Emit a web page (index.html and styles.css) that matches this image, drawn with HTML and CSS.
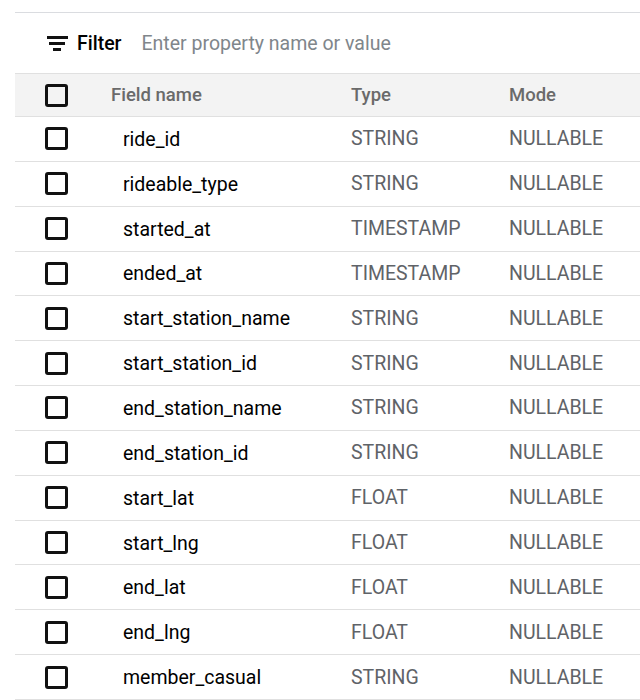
FILE: index.html
```html
<!DOCTYPE html>
<html>
<head>
<meta charset="utf-8">
<link rel="stylesheet" href="styles.css">
</head>
<body>
<div class="panel">
  <div class="filter-bar">
    <svg class="filter-icon" viewBox="0 0 21 15" width="21" height="15"><rect x="0" y="0" width="21" height="3" fill="#111"/><rect x="2" y="6" width="16" height="3" fill="#111"/><rect x="6" y="12" width="8" height="3" fill="#111"/></svg>
    <span class="filter-label">Filter</span>
    <span class="filter-input">Enter property name or value</span>
  </div>
  <div class="table">
    <div class="row head">
      <div class="cell check"><span class="box"></span></div>
      <div class="cell">Field name</div>
      <div class="cell">Type</div>
      <div class="cell">Mode</div>
    </div>
    <div class="row"><div class="cell check"><span class="box"></span></div><div class="cell name">ride_id</div><div class="cell type">STRING</div><div class="cell type">NULLABLE</div></div>
    <div class="row"><div class="cell check"><span class="box"></span></div><div class="cell name">rideable_type</div><div class="cell type">STRING</div><div class="cell type">NULLABLE</div></div>
    <div class="row"><div class="cell check"><span class="box"></span></div><div class="cell name">started_at</div><div class="cell type">TIMESTAMP</div><div class="cell type">NULLABLE</div></div>
    <div class="row"><div class="cell check"><span class="box"></span></div><div class="cell name">ended_at</div><div class="cell type">TIMESTAMP</div><div class="cell type">NULLABLE</div></div>
    <div class="row"><div class="cell check"><span class="box"></span></div><div class="cell name">start_station_name</div><div class="cell type">STRING</div><div class="cell type">NULLABLE</div></div>
    <div class="row"><div class="cell check"><span class="box"></span></div><div class="cell name">start_station_id</div><div class="cell type">STRING</div><div class="cell type">NULLABLE</div></div>
    <div class="row"><div class="cell check"><span class="box"></span></div><div class="cell name">end_station_name</div><div class="cell type">STRING</div><div class="cell type">NULLABLE</div></div>
    <div class="row"><div class="cell check"><span class="box"></span></div><div class="cell name">end_station_id</div><div class="cell type">STRING</div><div class="cell type">NULLABLE</div></div>
    <div class="row"><div class="cell check"><span class="box"></span></div><div class="cell name">start_lat</div><div class="cell type">FLOAT</div><div class="cell type">NULLABLE</div></div>
    <div class="row"><div class="cell check"><span class="box"></span></div><div class="cell name">start_lng</div><div class="cell type">FLOAT</div><div class="cell type">NULLABLE</div></div>
    <div class="row"><div class="cell check"><span class="box"></span></div><div class="cell name">end_lat</div><div class="cell type">FLOAT</div><div class="cell type">NULLABLE</div></div>
    <div class="row"><div class="cell check"><span class="box"></span></div><div class="cell name">end_lng</div><div class="cell type">FLOAT</div><div class="cell type">NULLABLE</div></div>
    <div class="row"><div class="cell check"><span class="box"></span></div><div class="cell name">member_casual</div><div class="cell type">STRING</div><div class="cell type">NULLABLE</div></div>
  </div>
</div>
</body>
</html>
```
FILE: styles.css
```css
html, body {
  margin: 0;
  padding: 0;
  background: #ffffff;
  overflow: hidden;
}
body {
  font-family: Roboto, "Liberation Sans", sans-serif;
  color: #202124;
}
.panel {
  margin-left: 15px;
  padding-top: 12px;
}
.filter-bar {
  border-top: 1px solid #dadce0;
  height: 60px;
  display: flex;
  align-items: center;
  padding-left: 32px;
}
.filter-icon {
  display: block;
  margin-right: 9px;
  margin-top: 1px;
}
.filter-label {
  font-size: 19.5px;
  font-weight: 500;
  color: #000000;
  margin-right: 20px;
}
.filter-input {
  font-size: 19.5px;
  color: #80868b;
}
.table {
  display: flex;
  flex-direction: column;
}
.row {
  display: grid;
  grid-template-columns: 96px 240px 158px 1fr;
  align-items: center;
  height: 44.85px;
  box-sizing: border-box;
  border-bottom: 1px solid #e0e0e0;
  font-size: 19.5px;
}
.row.head {
  height: 44px;
  background: #f3f3f3;
  border-top: 1px solid #e0e0e0;
  font-weight: 500;
  color: #6a6a6a;
  font-size: 18.5px;
}
.cell.check {
  padding-left: 30px;
  display: flex;
  align-items: center;
}
.box {
  display: block;
  width: 23px;
  height: 23px;
  box-sizing: border-box;
  border: 3px solid #111111;
  border-radius: 3px;
}
.cell.name {
  padding-left: 12px;
  color: #000000;
  padding-top: 1px;
}
.cell.type {
  color: #5f6368;
}
```
